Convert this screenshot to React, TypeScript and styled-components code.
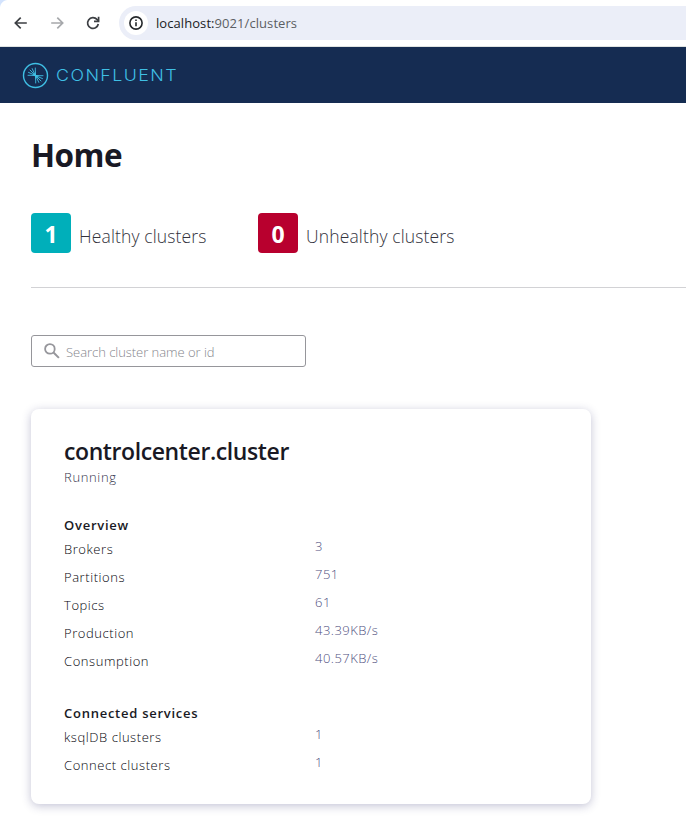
import React from "react";
import styled, { createGlobalStyle } from "styled-components";

const GlobalStyle = createGlobalStyle`
  * { box-sizing: border-box; }
  html, body { margin: 0; padding: 0; background: #fff; }
  body { font-family: "Open Sans", "Noto Sans", sans-serif; color: #191924; overflow: hidden; }
  h1, h2, h3 { margin: 0; }
`;

const Page = styled.div`
  width: 100%;
  height: 820px;
  overflow: hidden;
  background: #fff;
`;

const BrowserBar = styled.div`
  height: 47px;
  display: flex;
  align-items: flex-start;
  padding: 6px 0 0 13px;
  background: radial-gradient(circle at 8px 8px, #fff 7.5px, #d3e3fd 8.5px) 0 0 / 8px 8px no-repeat #fff;
  border-bottom: 1px solid #dfe3e2;
`;

const NavButton = styled.span<{ $dim?: boolean }>`
  width: 16px;
  height: 34px;
  margin-right: 20px;
  display: flex;
  align-items: center;
  justify-content: center;
  color: ${(p) => (p.$dim ? "#a6a8ab" : "#3c3f43")};
`;

const AddressBar = styled.div`
  flex: 1;
  height: 34px;
  margin-left: -2px;
  padding-left: 5px;
  display: flex;
  align-items: center;
  border-radius: 17px 0 0 17px;
  background: #ebeef8;
`;

const InfoBadge = styled.span`
  width: 24px;
  height: 24px;
  border-radius: 50%;
  background: #fff;
  display: flex;
  align-items: center;
  justify-content: center;
`;

const Url = styled.span`
  margin-left: 8px;
  font-size: 13px;
  line-height: 18px;
  letter-spacing: 0.07px;
  color: #5b5e63;
  b { font-weight: 400; color: #202124; }
`;

const BrandBar = styled.header`
  height: 56px;
  padding: 1px 0 0 22px;
  display: flex;
  align-items: center;
  background: #152c52;
  color: #3fbfe4;
`;

const Wordmark = styled.span`
  margin-left: 7px;
  font-family: Inter, sans-serif;
  font-size: 15.5px;
  font-weight: 300;
  line-height: 20px;
  letter-spacing: 1.25px;
  transform: scaleX(1.15);
  transform-origin: left center;
`;

const Main = styled.main`
  padding: 32px 0 0 31px;
`;

const Title = styled.h1`
  font-size: 31.5px;
  line-height: 40px;
  font-weight: 700;
  letter-spacing: -0.5px;
`;

const Summary = styled.div`
  height: 113px;
  padding-top: 38px;
  display: flex;
  border-bottom: 1px solid #d2d2d5;
`;

const Status = styled.div`
  width: 227px;
  display: flex;
  align-items: flex-start;
`;

const Count = styled.span<{ $color: string }>`
  width: 40px;
  height: 40px;
  border-radius: 4px;
  background: ${(p) => p.$color};
  color: #fff;
  font-size: 23px;
  font-weight: 700;
  line-height: 43px;
  text-align: center;
`;

const StatusLabel = styled.span`
  margin-left: 8px;
  font-size: 17.5px;
  font-weight: 300;
  line-height: 46px;
  letter-spacing: 0.14px;
  white-space: nowrap;
  color: #33333d;
`;

const Search = styled.label`
  width: 275px;
  height: 32px;
  margin-top: 47px;
  padding-left: 12px;
  display: flex;
  align-items: center;
  border: 1px solid #96969b;
  border-radius: 3px;
`;

const SearchHint = styled.span`
  margin: 2px 0 0 6px;
  font-size: 13px;
  line-height: 20px;
  font-weight: 300;
  letter-spacing: -0.04px;
  color: #85858c;
`;

const Card = styled.section`
  width: 560px;
  height: 395px;
  margin-top: 42px;
  padding: 26px 33px 0;
  border-radius: 8px;
  background: #fff;
  box-shadow: 0 2px 10px rgba(38, 38, 105, 0.28);
`;

const ClusterName = styled.h2`
  font-size: 23px;
  line-height: 32px;
  font-weight: 600;
  letter-spacing: -0.4px;
`;

const State = styled.div`
  font-size: 13px;
  line-height: 20px;
  font-weight: 300;
  letter-spacing: 0.65px;
  color: #35354c;
`;

const Group = styled.div`
  margin-top: 28px;
`;

const GroupTitle = styled.h3`
  font-size: 13px;
  line-height: 20px;
  font-weight: 600;
  letter-spacing: 0.74px;
`;

const Metric = styled.div`
  height: 28px;
  display: grid;
  grid-template-columns: 251px 1fr;
  font-size: 13px;
  font-weight: 300;
`;

const MetricName = styled.span`
  line-height: 28px;
  letter-spacing: 0.56px;
  color: #05050c;
`;

const MetricValue = styled.span`
  line-height: 22px;
  letter-spacing: 0.48px;
  color: #505080;
`;

const groups = [
  {
    title: "Overview",
    rows: [
      ["Brokers", "3"],
      ["Partitions", "751"],
      ["Topics", "61"],
      ["Production", "43.39KB/s"],
      ["Consumption", "40.57KB/s"],
    ],
  },
  {
    title: "Connected services",
    rows: [
      ["ksqlDB clusters", "1"],
      ["Connect clusters", "1"],
    ],
  },
];

const ArrowIcon = ({ flip }: { flip?: boolean }) => (
  <svg width="16" height="16" viewBox="0 0 16 16" fill="none" stroke="currentColor" strokeWidth="1.7">
    <path d={flip ? "M2.2 8H13.4M8.3 2.6L13.7 8L8.3 13.4" : "M13.8 8H2.6M7.7 2.6L2.3 8L7.7 13.4"} />
  </svg>
);

const ReloadIcon = () => (
  <svg width="16" height="16" viewBox="0 0 16 16" fill="none" stroke="currentColor" strokeWidth="1.7">
    <path d="M13.3 9A5.4 5.4 0 1 1 12 4.4L13.6 6" />
    <path d="M13.6 1.8V6.3H9" />
  </svg>
);

const InfoIcon = () => (
  <svg width="14" height="14" viewBox="0 0 14 14" fill="none" stroke="#25282b" strokeWidth="1.6">
    <circle cx="7" cy="7" r="6.1" />
    <path d="M7 6.2V10.3M7 3.6V5.1" />
  </svg>
);

const ConfluentMark = () => (
  <svg width="27" height="27" viewBox="0 0 27 27" fill="none" stroke="currentColor" strokeLinecap="round">
    <circle cx="13.5" cy="13.5" r="12" strokeWidth="1.4" />
    <path
      strokeWidth="0.9"
      d="M13.3 6V13.3H6M13.3 13.3L10.2 6.6M13.3 13.3L8 8M13.3 13.3L6.5 10.4M13.7 21V13.7H21M13.7 13.7L16.8 20.4M13.7 13.7L19 19M13.7 13.7L20.5 16.6"
    />
    <path fill="currentColor" stroke="none" d="M9.5 13L12.8 12.7L13.2 8.5L14 13L18 13.8L14.2 14.2L13.8 18.5L13 14.2Z" />
  </svg>
);

const SearchIcon = () => (
  <svg width="16" height="16" viewBox="0 0 16 16" fill="none" stroke="#96969b" strokeWidth="1.8">
    <circle cx="5.9" cy="5.9" r="4.8" />
    <path d="M9.5 9.5L14.9 14.9" strokeWidth="2" />
  </svg>
);

export default function App() {
  return (
    <>
      <GlobalStyle />
      <Page>
        <BrowserBar>
          <NavButton><ArrowIcon /></NavButton>
          <NavButton $dim><ArrowIcon flip /></NavButton>
          <NavButton><ReloadIcon /></NavButton>
          <AddressBar>
            <InfoBadge><InfoIcon /></InfoBadge>
            <Url><b>localhost:</b>9021/clusters</Url>
          </AddressBar>
        </BrowserBar>
        <BrandBar>
          <ConfluentMark />
          <Wordmark>CONFLUENT</Wordmark>
        </BrandBar>
        <Main>
          <Title>Home</Title>
          <Summary>
            <Status>
              <Count $color="#00afba">1</Count>
              <StatusLabel>Healthy clusters</StatusLabel>
            </Status>
            <Status>
              <Count $color="#b8002e">0</Count>
              <StatusLabel>Unhealthy clusters</StatusLabel>
            </Status>
          </Summary>
          <Search>
            <SearchIcon />
            <SearchHint>Search cluster name or id</SearchHint>
          </Search>
          <Card>
            <ClusterName>controlcenter.cluster</ClusterName>
            <State>Running</State>
            {groups.map((group) => (
              <Group key={group.title}>
                <GroupTitle>{group.title}</GroupTitle>
                {group.rows.map(([name, value]) => (
                  <Metric key={name}>
                    <MetricName>{name}</MetricName>
                    <MetricValue>{value}</MetricValue>
                  </Metric>
                ))}
              </Group>
            ))}
          </Card>
        </Main>
      </Page>
    </>
  );
}
